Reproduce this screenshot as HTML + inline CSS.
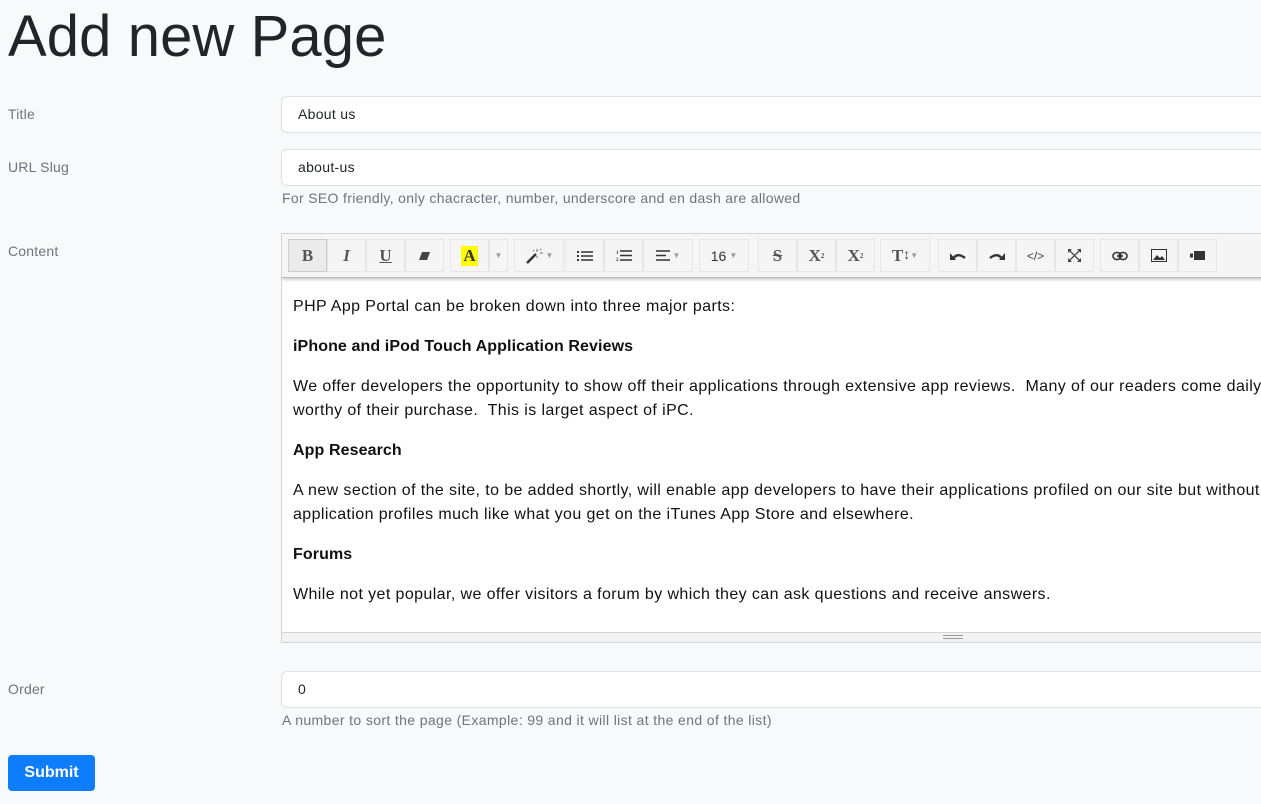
<!DOCTYPE html>
<html><head><meta charset="utf-8"><style>
*{box-sizing:border-box;margin:0;padding:0}
body{width:1261px;height:804px;overflow:hidden;background:#f8f9fa;font-family:"Liberation Sans",sans-serif;color:#212529;position:relative}
.abs{position:absolute}
h1{position:absolute;left:8px;top:3px;font-size:58px;font-weight:400;color:#212529;letter-spacing:0.1px}
.lbl{position:absolute;left:8px;font-size:14px;color:#6c757d;letter-spacing:0.2px}
.inp{position:absolute;left:281px;width:1000px;height:37px;background:#fff;border:1px solid #dee2e6;border-radius:6px;font-size:14px;color:#212529;padding:9px 16px;letter-spacing:0.3px}
.help{position:absolute;left:282px;font-size:14px;color:#6c757d;letter-spacing:0.33px;white-space:nowrap}
.ed{position:absolute;left:281px;top:233px;width:1000px;height:410px;border:1px solid #d5d5d5;background:#fff;overflow:hidden}
.tb{position:absolute;left:0;top:0;width:1000px;height:44px;background:#f5f5f5;border-bottom:1px solid #bbb;box-shadow:0 2px 3px rgba(0,0,0,.2);z-index:2}
.b{position:absolute;top:5px;height:33px;border:1px solid #e6e6e6;background:#f5f5f5;display:flex;align-items:center;justify-content:center;font-family:"Liberation Serif",serif;font-weight:bold;font-size:17px;color:#555}
.b svg{display:block}
.car{font-size:8px;color:#999;margin-left:3px;font-family:"Liberation Sans"}
.ct{position:absolute;left:11px;top:61px;font-size:16px;line-height:24px;color:#111;width:1400px;letter-spacing:0.4px;white-space:nowrap}
.ct p{margin-bottom:16px}
.ct b{letter-spacing:0.1px}
.st{position:absolute;left:0;top:398px;width:1000px;height:11px;background:#f3f3f3;border-top:1px solid #d5d5d5}
.btn{position:absolute;left:8px;top:755px;width:87px;height:36px;background:#0d7dfd;border-radius:4px;color:#fff;font-weight:bold;font-size:16px;text-align:center;line-height:36px}
</style></head><body>
<h1>Add new Page</h1>
<div class="lbl" style="top:106px">Title</div>
<div class="inp" style="top:96px">About us</div>
<div class="lbl" style="top:159px">URL Slug</div>
<div class="inp" style="top:149px">about-us</div>
<div class="help" style="top:190px">For SEO friendly, only chacracter, number, underscore and en dash are allowed</div>
<div class="lbl" style="top:243px">Content</div>
<div class="ed">
<div class="tb">
<div class="b" style="left:6px;width:39px;background:#ebebeb;border-color:#ccc">B</div>
<div class="b" style="left:45px;width:39px;font-style:italic">I</div>
<div class="b" style="left:84px;width:39px;text-decoration:underline">U</div>
<div class="b" style="left:123px;width:39px"><svg width="12" height="10"><path d="M3 1h8l-3 8H0z" fill="#444"/></svg></div>
<div class="b" style="left:168px;width:39px"><span style="background:#ff0;color:#333;padding:0 2px">A</span></div>
<div class="b" style="left:207px;width:19px"><span class="car" style="margin:0">▼</span></div>
<div class="b" style="left:232px;width:50px"><svg width="18" height="16"><path d="M2 15l9-9" stroke="#333" stroke-width="2.5"/><path d="M12 1v3M15 5h3M12 8v2M9 3l-1-1M15 2l1-1" stroke="#666"/></svg><span class="car">▼</span></div>
<div class="b" style="left:283px;width:39px"><svg width="16" height="12"><path d="M0 1h2v2H0zM0 5h2v2H0zM0 9h2v2H0z" fill="#333"/><path d="M4 2h12M4 6h12M4 10h12" stroke="#333" stroke-width="1.6"/></svg></div>
<div class="b" style="left:322px;width:39px"><svg width="16" height="13"><text x="0" y="5" font-size="5" fill="#333">1</text><text x="0" y="12" font-size="5" fill="#333">2</text><path d="M4 2h12M4 6.5h12M4 11h12" stroke="#333" stroke-width="1.6"/></svg></div>
<div class="b" style="left:361px;width:50px"><svg width="14" height="11"><path d="M0 1h14M0 5.5h10M0 10h14" stroke="#333" stroke-width="1.6"/></svg><span class="car">▼</span></div>
<div class="b" style="left:417px;width:50px;font-family:'Liberation Sans';font-weight:normal;font-size:14px;color:#333">16<span class="car">▼</span></div>
<div class="b" style="left:476px;width:39px;text-decoration:line-through">S</div>
<div class="b" style="left:515px;width:39px">X<sup style="font-size:7px">2</sup></div>
<div class="b" style="left:554px;width:39px">X<sub style="font-size:7px">2</sub></div>
<div class="b" style="left:598px;width:50px">T<span style="font-weight:normal;font-size:14px">↕</span><span class="car" style="margin:0">▼</span></div>
<div class="b" style="left:656px;width:39px"><svg width="16" height="10"><path d="M3 8Q7 1 15 7" stroke="#333" stroke-width="2.4" fill="none"/><path d="M0 2l6 7H0z" fill="#333"/></svg></div>
<div class="b" style="left:695px;width:39px"><svg width="16" height="10"><path d="M13 8Q9 1 1 7" stroke="#333" stroke-width="2.4" fill="none"/><path d="M16 2l-6 7h6z" fill="#333"/></svg></div>
<div class="b" style="left:734px;width:39px;font-family:'Liberation Sans';font-weight:normal;font-size:12px;color:#444">&lt;/&gt;</div>
<div class="b" style="left:773px;width:39px"><svg width="13" height="13"><path d="M1 1l11 11M12 1L1 12" stroke="#444" stroke-width="1.3"/><path d="M0 0h4L0 4zM13 0H9l4 4zM0 13h4L0 9zM13 13H9l4-4z" fill="#444"/></svg></div>
<div class="b" style="left:818px;width:39px"><svg width="16" height="10"><rect x="1" y="1.5" width="8" height="7" rx="3.5" stroke="#333" stroke-width="1.6" fill="none"/><rect x="7" y="1.5" width="8" height="7" rx="3.5" stroke="#333" stroke-width="1.6" fill="none"/><path d="M5 5h6" stroke="#333" stroke-width="1.6"/></svg></div>
<div class="b" style="left:857px;width:39px"><svg width="16" height="13"><rect x="0.5" y="0.5" width="15" height="12" stroke="#333" fill="none"/><path d="M2 11l4-5 3 3 2-2 3 4z" fill="#333"/></svg></div>
<div class="b" style="left:896px;width:39px"><svg width="15" height="9"><rect x="0" y="2.5" width="3" height="4" fill="#333"/><rect x="4" y="0" width="11" height="9" fill="#333"/></svg></div>
</div>
<div class="ct">
<p>PHP App Portal can be broken down into three major parts:</p>
<p><b>iPhone and iPod Touch Application Reviews</b></p>
<p>We offer developers the opportunity to show off their applications through extensive app reviews.&nbsp; Many of our readers come daily to see<br>worthy of their purchase.&nbsp; This is larget aspect of iPC.</p>
<p><b>App Research</b></p>
<p>A new section of the site, to be added shortly, will enable app developers to have their applications profiled on our site but without a review<br>application profiles much like what you get on the iTunes App Store and elsewhere.</p>
<p><b>Forums</b></p>
<p>While not yet popular, we offer visitors a forum by which they can ask questions and receive answers.</p>
</div>
<div class="st"><div class="abs" style="left:661px;top:2px;width:20px;height:4px;border-top:1px solid #999;border-bottom:1px solid #999"></div></div>
</div>
<div class="lbl" style="top:681px">Order</div>
<div class="inp" style="top:671px">0</div>
<div class="help" style="top:712px;letter-spacing:0.37px">A number to sort the page (Example: 99 and it will list at the end of the list)</div>
<div class="btn">Submit</div>
</body></html>
